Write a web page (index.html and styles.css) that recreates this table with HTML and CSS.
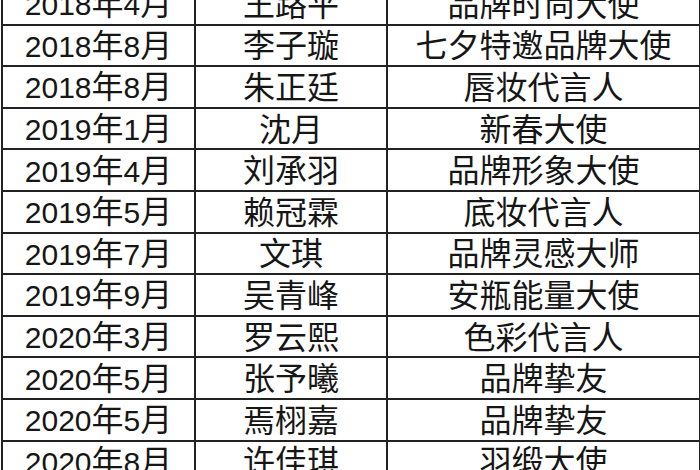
FILE: index.html
```html
<!DOCTYPE html>
<html lang="zh-CN">
<head>
<meta charset="utf-8">
<title>品牌大使</title>
<link rel="stylesheet" href="styles.css">
</head>
<body>
<div class="viewport">
<table class="ambassadors">
<colgroup><col class="c-date"><col class="c-name"><col class="c-role"></colgroup>
<tbody>
<tr><td><span class="num">2018</span>年<span class="num">4</span>月</td><td>王路平</td><td>品牌时尚大使</td></tr>
<tr><td><span class="num">2018</span>年<span class="num">8</span>月</td><td>李子璇</td><td>七夕特邀品牌大使</td></tr>
<tr><td><span class="num">2018</span>年<span class="num">8</span>月</td><td>朱正廷</td><td>唇妆代言人</td></tr>
<tr><td><span class="num">2019</span>年<span class="num">1</span>月</td><td>沈月</td><td>新春大使</td></tr>
<tr><td><span class="num">2019</span>年<span class="num">4</span>月</td><td>刘承羽</td><td>品牌形象大使</td></tr>
<tr><td><span class="num">2019</span>年<span class="num">5</span>月</td><td>赖冠霖</td><td>底妆代言人</td></tr>
<tr><td><span class="num">2019</span>年<span class="num">7</span>月</td><td>文琪</td><td>品牌灵感大师</td></tr>
<tr><td><span class="num">2019</span>年<span class="num">9</span>月</td><td>吴青峰</td><td>安瓶能量大使</td></tr>
<tr><td><span class="num">2020</span>年<span class="num">3</span>月</td><td>罗云熙</td><td>色彩代言人</td></tr>
<tr><td><span class="num">2020</span>年<span class="num">5</span>月</td><td>张予曦</td><td>品牌挚友</td></tr>
<tr><td><span class="num">2020</span>年<span class="num">5</span>月</td><td>焉栩嘉</td><td>品牌挚友</td></tr>
<tr><td><span class="num">2020</span>年<span class="num">8</span>月</td><td>许佳琪</td><td>羽缎大使</td></tr>
</tbody>
</table>
</div>
</body>
</html>
```
FILE: styles.css
```css
html, body {
  margin: 0;
  padding: 0;
  background: #fff;
}
.viewport {
  width: 700px;
  height: 470px;
  overflow: hidden;
}
.ambassadors {
  margin-top: -18px;
  margin-left: 1px;
  border-collapse: collapse;
  table-layout: fixed;
  width: 698px;
  font-family: "Liberation Sans", "Noto Sans CJK SC", sans-serif;
  font-size: 32px;
  color: #161616;
}
.c-date { width: 193px; }
.c-name { width: 192px; }
.c-role { width: 313px; }
.ambassadors td {
  border: 2px solid #222;
  height: 41.6px;
  padding: 2px 0 0 0;
  text-align: center;
  vertical-align: middle;
  white-space: nowrap;
  line-height: 36px;
  box-sizing: border-box;
}
.num {
  font-size: 30px;
}
```
